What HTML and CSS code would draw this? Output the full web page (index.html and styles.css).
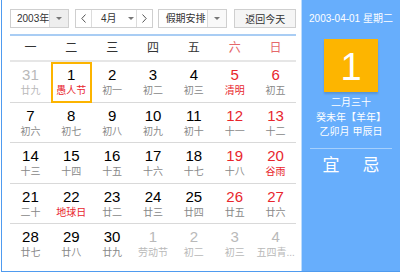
FILE: index.html
```html
<!DOCTYPE html>
<html lang="zh-CN">
<head>
  <meta charset="UTF-8">
  <meta name="viewport" content="width=device-width, initial-scale=1.0">
  <link rel="stylesheet" href="styles.css">
</head>
<body>
  <div class="calendar">
    <div class="main">
      <div class="toolbar">
        <div class="select year">
          <span class="value">2003年</span>
          <span class="arrow gray"><i class="caret"></i></span>
        </div>
        <div class="month-box">
          <span class="nav"><svg width="5" height="9" viewBox="0 0 5 9"><polyline points="4.5,0.5 0.8,4.5 4.5,8.5" fill="none" stroke="#555" stroke-width="1"/></svg></span>
          <span class="month-value">4月<i class="caret"></i></span>
          <span class="nav"><svg width="5" height="9" viewBox="0 0 5 9"><polyline points="0.5,0.5 4.2,4.5 0.5,8.5" fill="none" stroke="#555" stroke-width="1"/></svg></span>
        </div>
        <div class="select holiday">
          <span class="value">假期安排</span>
          <span class="arrow"><i class="caret"></i></span>
        </div>
        <button class="today">返回今天</button>
      </div>

      <div class="weekdays">
        <span>一</span><span>二</span><span>三</span><span>四</span><span>五</span>
        <span class="weekend">六</span><span class="weekend">日</span>
      </div>

      <div class="days">
        <div class="day other"><b>31</b><em>廿九</em></div>
        <div class="day selected"><b>1</b><em class="fest">愚人节</em></div>
        <div class="day"><b>2</b><em>初一</em></div>
        <div class="day"><b>3</b><em>初二</em></div>
        <div class="day"><b>4</b><em>初三</em></div>
        <div class="day red"><b>5</b><em class="fest">清明</em></div>
        <div class="day red"><b>6</b><em>初五</em></div>

        <div class="day"><b>7</b><em>初六</em></div>
        <div class="day"><b>8</b><em>初七</em></div>
        <div class="day"><b>9</b><em>初八</em></div>
        <div class="day"><b>10</b><em>初九</em></div>
        <div class="day"><b>11</b><em>初十</em></div>
        <div class="day red"><b>12</b><em>十一</em></div>
        <div class="day red"><b>13</b><em>十二</em></div>

        <div class="day"><b>14</b><em>十三</em></div>
        <div class="day"><b>15</b><em>十四</em></div>
        <div class="day"><b>16</b><em>十五</em></div>
        <div class="day"><b>17</b><em>十六</em></div>
        <div class="day"><b>18</b><em>十七</em></div>
        <div class="day red"><b>19</b><em>十八</em></div>
        <div class="day red"><b>20</b><em class="fest">谷雨</em></div>

        <div class="day"><b>21</b><em>二十</em></div>
        <div class="day"><b>22</b><em class="fest">地球日</em></div>
        <div class="day"><b>23</b><em>廿二</em></div>
        <div class="day"><b>24</b><em>廿三</em></div>
        <div class="day"><b>25</b><em>廿四</em></div>
        <div class="day red"><b>26</b><em>廿五</em></div>
        <div class="day red"><b>27</b><em>廿六</em></div>

        <div class="day last"><b>28</b><em>廿七</em></div>
        <div class="day last"><b>29</b><em>廿八</em></div>
        <div class="day last"><b>30</b><em>廿九</em></div>
        <div class="day last other"><b>1</b><em>劳动节</em></div>
        <div class="day last other"><b>2</b><em>初二</em></div>
        <div class="day last other"><b>3</b><em>初三</em></div>
        <div class="day last other"><b>4</b><em>五四青...</em></div>
      </div>
    </div>

    <div class="side">
      <div class="date">2003-04-01 星期二</div>
      <div class="big-day">1</div>
      <div class="lunar-info">
        <div>二月三十</div>
        <div>癸未年【羊年】</div>
        <div>乙卯月 甲辰日</div>
      </div>
      <div class="divider"></div>
      <div class="yi-ji">
        <span>宜</span><span>忌</span>
      </div>
    </div>
  </div>
</body>
</html>
```

FILE: styles.css
```css
body {
  margin: 0;
  padding-left: 1px;
  font-family: "Liberation Sans", "Noto Sans CJK SC", sans-serif;
  background-color: #ffffff;
}
.calendar {
  display: flex;
  width: 399px;
  height: 272px;
  box-sizing: border-box;
  border-left: 1px solid #4f9bef;
  border-bottom: 1px solid #4f9bef;
}
.main {
  width: 299px;
  box-sizing: border-box;
  padding: 9px 5px 0 8px;
}
.toolbar {
  display: flex;
  height: 19px;
  padding-bottom: 6px;
  border-bottom: 2px solid #a9cdf4;
  font-size: 10px;
  color: #333;
  white-space: nowrap;
}
.select,
.month-box,
.today {
  display: flex;
  height: 19px;
  box-sizing: border-box;
  border: 1px solid #cfcfcf;
  background-color: #ffffff;
}
.select .value {
  flex: 1;
  padding-left: 5px;
  line-height: 17px;
}
.arrow {
  width: 18px;
  flex: none;
  border-left: 1px solid #dcdcdc;
  display: flex;
  align-items: center;
  justify-content: center;
  background-color: #f9f9f9;
}
.arrow.gray {
  background-color: #eeeeee;
}
.caret {
  display: inline-block;
  width: 0;
  height: 0;
  border-left: 3px solid transparent;
  border-right: 3px solid transparent;
  border-top: 3px solid #777;
}
.year {
  width: 59px;
  margin-right: 6px;
}
.year .value {
  padding-left: 6px;
}
.month-box {
  width: 78px;
  margin-right: 5px;
}
.nav {
  width: 15px;
  display: flex;
  align-items: center;
  justify-content: center;
}
.nav:first-child {
  border-right: 1px solid #dcdcdc;
}
.nav:last-child {
  border-left: 1px solid #dcdcdc;
}
.month-value {
  flex: 1;
  display: flex;
  align-items: center;
  padding-left: 9px;
  line-height: 17px;
}
.month-value .caret {
  margin-left: 11px;
}
.holiday {
  width: 70px;
  margin-right: 7px;
}
.holiday .value {
  padding-left: 7px;
}
.today {
  width: 62px;
  justify-content: center;
  align-items: center;
  padding: 0;
  font-family: inherit;
  font-size: 10px;
  color: #333;
  background-color: #f5f5f5;
}
.weekdays {
  display: grid;
  grid-template-columns: repeat(7, 1fr);
  height: 24px;
  border-bottom: 2px solid #e6e6e6;
  font-size: 12px;
  line-height: 24px;
  text-align: center;
  color: #333;
}
.weekdays .weekend {
  color: #e5686b;
}
.days {
  display: grid;
  grid-template-columns: repeat(7, 1fr);
  grid-auto-rows: 40.5px;
}
.day {
  box-sizing: border-box;
  border-bottom: 1px solid #d9d9d9;
  padding-top: 4px;
  text-align: center;
  overflow: hidden;
}
.day.last {
  border-bottom: none;
}
.day b {
  display: block;
  font-weight: normal;
  font-size: 15px;
  line-height: 18px;
  color: #000;
}
.day em {
  display: block;
  font-style: normal;
  font-size: 10px;
  line-height: 14px;
  color: #888;
  white-space: nowrap;
}
.day.red b {
  color: #e8262d;
}
.day em.fest {
  color: #e8262d;
}
.day.other b,
.day.other em {
  color: #b9b9b9;
}
.day.selected {
  border: 2px solid #fcb400;
  padding-top: 2px;
}
.side {
  flex: 1;
  background-color: #67aefc;
  border-left: 1px solid #bcdcfd;
  color: #ffffff;
  text-align: center;
  padding-top: 12px;
}
.date {
  font-size: 10px;
  line-height: 14px;
}
.big-day {
  width: 54px;
  height: 53px;
  margin: 13px auto 0;
  background-color: #fdb500;
  box-shadow: 0 2px 2px rgba(0, 0, 0, 0.15);
  font-size: 38px;
  line-height: 57px;
  overflow: hidden;
}
.lunar-info {
  margin-top: 4px;
  font-size: 10px;
  line-height: 14.5px;
}
.divider {
  height: 1px;
  margin: 8px 8px 0;
  background-color: #a5d0fd;
}
.yi-ji {
  display: flex;
  justify-content: center;
  gap: 23px;
  margin-top: 7px;
  font-size: 17px;
  line-height: 20px;
}
```
